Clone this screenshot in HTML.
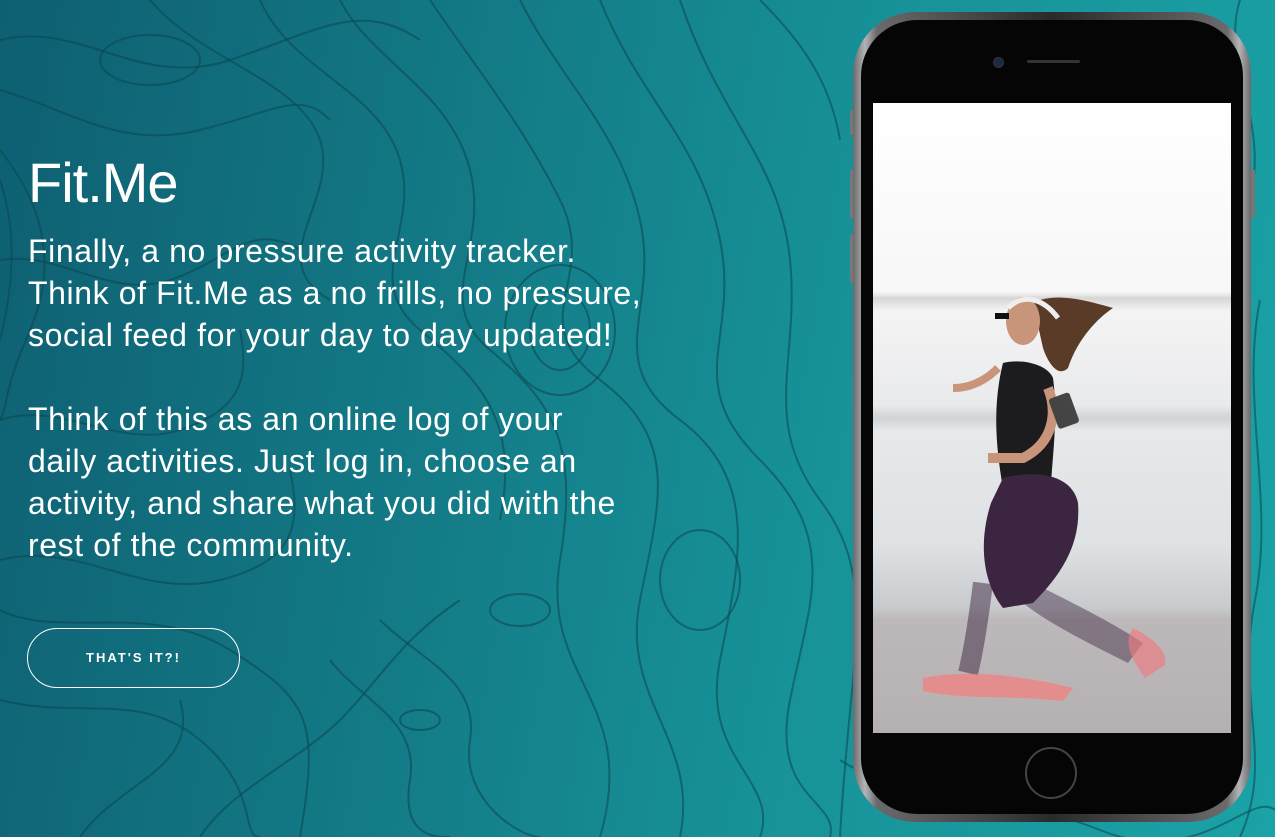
<!DOCTYPE html>
<html><head><meta charset="utf-8"><style>
html,body{margin:0;padding:0}
body{width:1275px;height:837px;overflow:hidden;position:relative;font-family:"Liberation Sans",sans-serif;
background:linear-gradient(100deg,#0e5f72 0%,#137a86 35%,#179399 65%,#1aa2a6 100%);}
svg.topo{position:absolute;left:0;top:0}
h1{position:absolute;left:28px;top:150px;margin:0;font-weight:normal;font-size:56px;color:#fff;letter-spacing:-1px}
.p{position:absolute;left:28px;font-size:32px;line-height:42px;color:#fff;letter-spacing:0.6px;white-space:nowrap}
.btn{position:absolute;left:27px;top:628px;width:213px;height:60px;border:1.5px solid #fff;border-radius:30px;box-sizing:border-box;color:#fff;font-size:13px;font-weight:bold;letter-spacing:2px;text-align:center;line-height:58px}
.phone{position:absolute;left:853px;top:12px;width:398px;height:810px;border-radius:62px;background:linear-gradient(90deg,#6a6a6c,#b4b4b6 3%,#6a6a6c 6%,#2a2a2c 50%,#6a6a6c 94%,#b4b4b6 97%,#6a6a6c);}
.inner{position:absolute;left:8px;top:8px;right:8px;bottom:8px;border-radius:56px;background:#050505}
.screen{position:absolute;left:873px;top:103px;width:358px;height:630px;overflow:hidden;background:linear-gradient(180deg,#fff 0%,#f7f7f8 30%,#d8d6d4 31%,#f4f4f5 33%,#e9eaec 48%,#cfd3d6 50%,#e6e8ea 52%,#dfe2e4 70%,#c8cbce 80%,#bdb9ba 82%,#b5b0b2 100%)}
.btnside{position:absolute;background:#777;width:4px}
</style></head><body>
<svg class="topo" width="1275" height="837" fill="none" stroke="#0b4650" stroke-opacity="0.55" stroke-width="2">
<path d="M0 40 C80 20 140 90 230 60 S360 0 420 40"/>
<path d="M150 0 C200 60 300 80 320 140 S260 260 330 300"/>
<path d="M260 0 C290 70 380 90 400 160 S360 280 420 330 S520 420 500 520"/>
<path d="M340 0 C370 60 450 90 470 170 S430 300 490 350 S580 440 560 560 S640 700 600 837"/>
<path d="M430 0 C470 60 520 120 560 200 S520 320 600 380 S660 500 640 600 S700 740 680 837"/>
<path d="M520 0 C560 80 620 130 640 220 S600 360 680 420 S740 560 720 660 S780 780 760 837"/>
<path d="M600 0 C640 100 700 140 720 240 S680 380 760 460 S810 600 790 700 S840 800 830 837"/>
<path d="M680 0 C720 120 780 160 790 260 S760 420 820 500 S850 650 840 837"/>
<path d="M0 420 C60 400 120 450 180 430 S250 380 240 330"/>
<path d="M0 560 C80 540 140 600 220 580 S300 520 290 470"/>
<path d="M0 610 C60 640 150 600 230 650 S320 720 300 837"/>
<path d="M0 700 C80 720 140 690 200 740 S240 837 260 837"/>
<path d="M80 837 C120 780 200 770 180 700"/>
<path d="M380 620 C420 660 480 680 470 740 S520 837 540 837"/>
<path d="M330 660 C360 700 420 720 410 780 S440 837 450 837"/>
<path d="M0 260 C60 250 110 300 170 280 S250 220 300 250"/>
<path d="M0 90 C70 110 120 150 200 130 S300 90 330 120"/>
<path d="M200 837 C230 790 300 760 340 720 S400 640 460 600"/>
<ellipse cx="420" cy="720" rx="20" ry="10"/>
<ellipse cx="520" cy="610" rx="30" ry="16"/>
<ellipse cx="560" cy="330" rx="30" ry="40"/>
<ellipse cx="560" cy="330" rx="55" ry="65"/>
<ellipse cx="700" cy="580" rx="40" ry="50"/>
<ellipse cx="150" cy="60" rx="50" ry="25"/>
<path d="M1240 0 C1220 60 1270 120 1250 200"/>
<path d="M1260 300 C1240 400 1275 500 1255 600 S1275 760 1240 837"/>
<path d="M840 760 C900 800 1000 790 1100 830 S1250 790 1275 810"/>
<path d="M760 0 C800 40 830 80 840 140"/>
<path d="M0 180 C20 240 10 300 0 340"/>
<path d="M0 150 C40 200 60 260 30 330 S10 400 0 420"/>
</svg>
<h1>Fit.Me</h1>
<div class="p" style="top:230px">Finally, a no pressure activity tracker.<br>Think of Fit.Me as a no frills, no pressure,<br>social feed for your day to day updated!</div>
<div class="p" style="top:398px">Think of this as an online log of your<br>daily activities. Just log in, choose an<br>activity, and share what you did with the<br>rest of the community.</div>
<div class="btn">THAT'S IT?!</div>
<div class="btnside" style="left:850px;top:110px;height:25px"></div>
<div class="btnside" style="left:850px;top:170px;height:48px"></div>
<div class="btnside" style="left:850px;top:235px;height:48px"></div>
<div class="btnside" style="left:1251px;top:170px;height:48px"></div>
<div class="phone"><div class="inner"></div></div>
<div style="position:absolute;left:993px;top:57px;width:9px;height:9px;border-radius:50%;background:#1a2a44;border:1px solid #333"></div>
<div style="position:absolute;left:1027px;top:60px;width:53px;height:3px;border-radius:2px;background:#333"></div>
<div style="position:absolute;left:1025px;top:747px;width:52px;height:52px;border-radius:50%;border:2px solid #444;box-sizing:border-box"></div>
<div class="screen">
<svg width="358" height="630" style="position:absolute;left:0;top:0">
<path d="M160 200 C180 190 205 195 240 205 C225 215 205 235 195 265 C185 275 175 260 170 245Z" fill="#5a3b28"/>
<ellipse cx="150" cy="218" rx="17" ry="24" fill="#c9957a"/>
<path d="M135 205 C150 190 170 195 185 215" stroke="#eee" stroke-width="5" fill="none"/>
<rect x="122" y="210" width="14" height="6" fill="#111"/>
<path d="M125 265 C110 280 95 285 80 285" stroke="#c9957a" stroke-width="8" fill="none"/>
<path d="M130 260 C150 255 175 262 180 275 C185 310 180 350 178 380 L130 385 C122 340 120 300 130 260Z" fill="#1c1b1e"/>
<path d="M175 285 C185 310 180 340 150 355 L115 355" stroke="#c9957a" stroke-width="10" fill="none"/>
<rect x="180" y="292" width="22" height="32" rx="3" fill="#444" transform="rotate(-20 190 308)"/>
<path d="M130 375 C170 365 200 375 205 400 C208 440 190 470 160 500 L130 505 C110 480 105 440 118 400Z" fill="#3b2540"/>
<path d="M160 480 C200 500 240 520 270 540 L255 560 C215 540 175 520 150 500Z" fill="#3b2540" opacity="0.45"/>
<path d="M110 480 C105 520 100 550 95 570" stroke="#3b2540" stroke-width="20" opacity="0.5" fill="none"/>
<path d="M50 575 C100 565 160 575 200 585 L190 598 C140 592 90 597 50 588Z" fill="#f28080" opacity="0.75"/>
<path d="M260 525 C280 535 295 548 292 562 L272 575 C258 555 250 540 260 525Z" fill="#ee7a80" opacity="0.65"/>
</svg>
</div>
</body></html>
